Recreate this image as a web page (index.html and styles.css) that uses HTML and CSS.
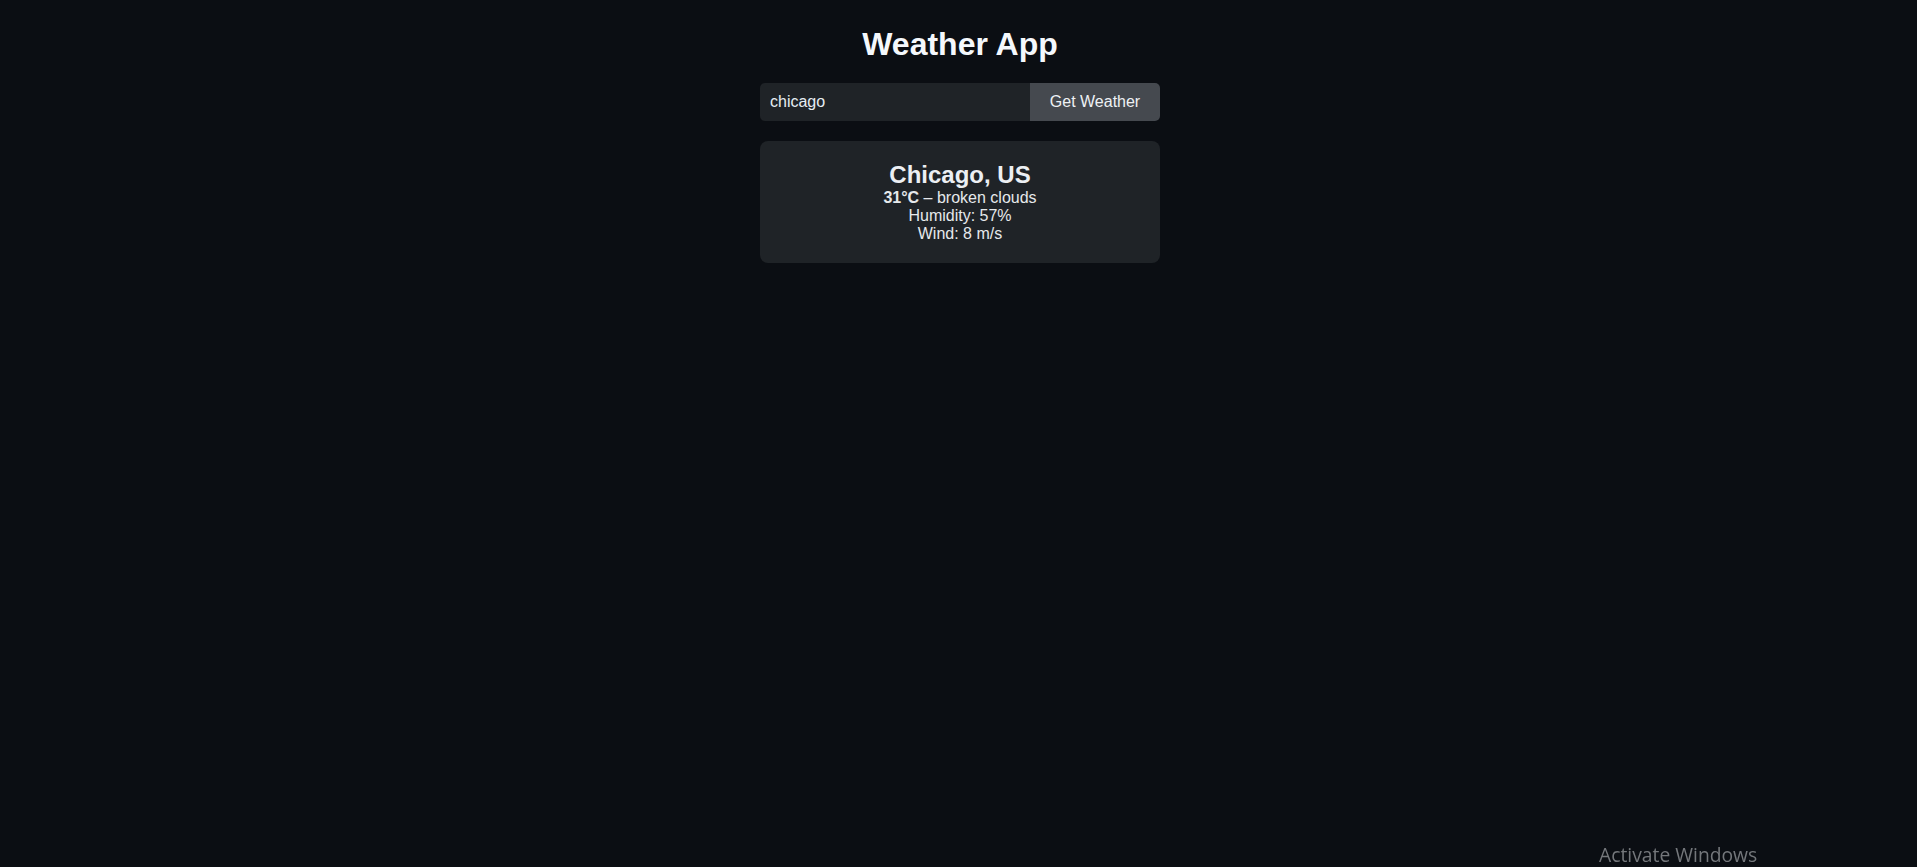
FILE: index.html
```html
<!DOCTYPE html>
<html lang="en">
<head>
<meta charset="utf-8">
<title>Weather App</title>
<link rel="stylesheet" href="styles.css">
</head>
<body>
<main class="app">
  <h1 class="title">Weather App</h1>
  <form class="search">
    <input class="search-input" type="text" value="chicago">
    <button class="search-btn" type="button">Get Weather</button>
  </form>
  <section class="card">
    <h2 class="city">Chicago, US</h2>
    <p class="line"><strong>31°C</strong> – broken clouds</p>
    <p class="line">Humidity: 57%</p>
    <p class="line">Wind: 8 m/s</p>
  </section>
</main>
<div class="watermark">Activate Windows</div>
</body>
</html>
```

FILE: styles.css
```css
html, body {
  margin: 0;
  padding: 0;
  height: 100%;
}
body {
  background: #0b0e13;
  color: #e6edf3;
  font-family: "Liberation Sans", Arial, sans-serif;
  font-size: 16px;
  overflow: hidden;
}
.app {
  display: flex;
  flex-direction: column;
  align-items: center;
  padding-top: 26px;
  padding-left: 3px;
}
.title {
  margin: 0 0 20px;
  font-size: 32px;
  font-weight: bold;
  color: #f5f8fc;
  line-height: normal;
}
.search {
  display: flex;
  width: 400px;
  height: 38px;
  margin: 0 0 20px;
  border-radius: 5px;
  overflow: hidden;
}
.search-input {
  flex: 1;
  min-width: 0;
  border: none;
  outline: none;
  background: #1f2327;
  color: #e6edf3;
  font-family: "Liberation Sans", Arial, sans-serif;
  font-size: 16px;
  padding: 0 10px;
  margin: 0;
}
.search-btn {
  width: 130px;
  border: none;
  margin: 0;
  background: #45494f;
  color: #eef1f4;
  font-family: "Liberation Sans", Arial, sans-serif;
  font-size: 16px;
  padding: 0;
  cursor: pointer;
}
.card {
  box-sizing: border-box;
  width: 400px;
  padding: 20px;
  background: #1f2327;
  border-radius: 8px;
  text-align: center;
}
.city {
  margin: 0;
  font-size: 24px;
  font-weight: bold;
  color: #eceff3;
  line-height: normal;
}
.line {
  margin: 0;
  line-height: normal;
  color: #e6e9ec;
}
.watermark {
  position: fixed;
  left: 1599px;
  top: 843px;
  font-family: "Open Sans", "Noto Sans", sans-serif;
  font-size: 19.3px;
  line-height: 24px;
  color: #74777b;
  white-space: nowrap;
}
```
